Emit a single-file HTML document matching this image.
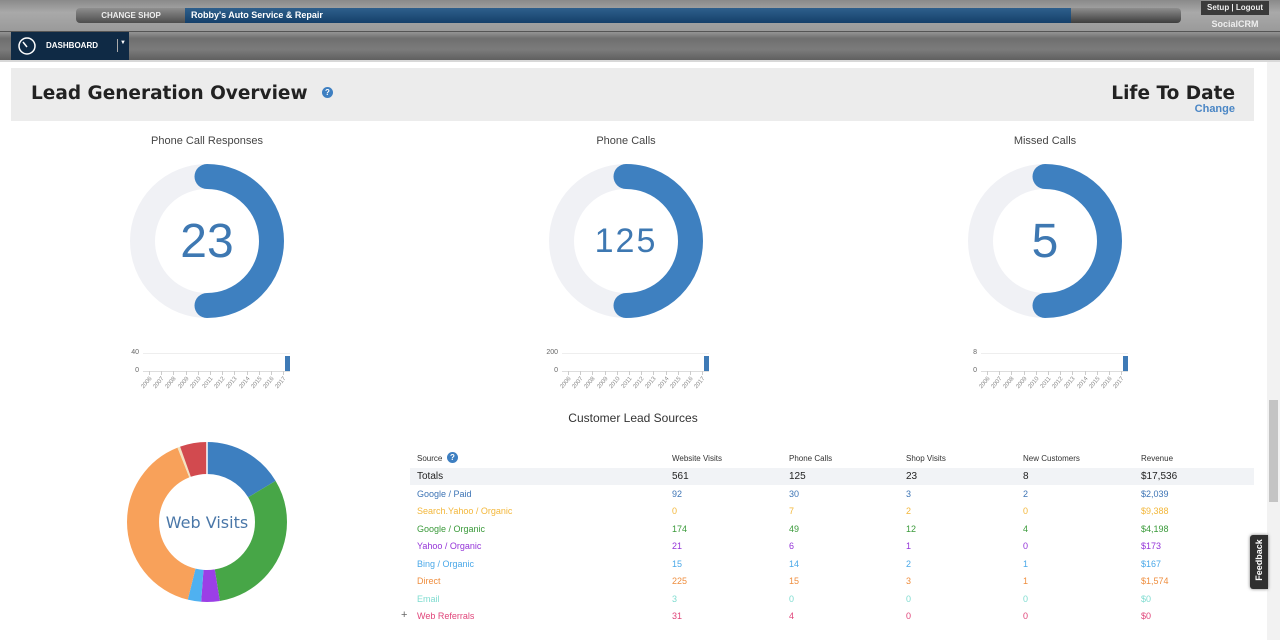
<!DOCTYPE html>
<html><head><meta charset="utf-8">
<style>
*{margin:0;padding:0;box-sizing:border-box}
body{width:1280px;height:640px;overflow:hidden;background:#fff;font-family:"Liberation Sans",sans-serif;position:relative}
.a{position:absolute}
#top{left:0;top:0;width:1280px;height:62px;background:linear-gradient(180deg,#8a8a8a 0%,#a9a9a9 20%,#9a9a9a 50%,#6f6f6f 62%,#7b7b7b 80%,#5a5a5a 100%)}
.gtitle{font-size:11px;color:#444;text-align:center;width:300px}
.num{font-size:48px;color:#3e78b2;text-align:center;width:200px}
.yl{font-size:6px;color:#888;transform:rotate(-50deg);transform-origin:right top;white-space:nowrap}
table{border-collapse:collapse;font-size:9px}
td{height:17.5px;padding:0}
</style></head><body>
<div id="top" class="a"></div>
<div class="a" style="left:76px;top:8px;width:110px;height:15px;background:linear-gradient(#8e8e8e,#4e4e4e);border-radius:4px 0 0 4px;color:#eee;font-size:8px;font-weight:bold;text-align:center;line-height:15px">CHANGE SHOP</div>
<div class="a" style="left:185px;top:8px;width:890px;height:15px;background:linear-gradient(#2e5f8c,#15406a);color:#fff;font-size:9px;font-weight:bold;line-height:15px;padding-left:6px">Robby's Auto Service &amp; Repair</div>
<div class="a" style="left:1071px;top:8px;width:110px;height:15px;background:linear-gradient(#8e8e8e,#3e3e3e);border-radius:0 4px 4px 0"></div>
<div class="a" style="left:1201px;top:1px;width:68px;height:14px;background:#3a3a3a;color:#eee;font-size:8px;font-weight:bold;text-align:center;line-height:14px">Setup | Logout</div>
<div class="a" style="left:1201px;top:19px;width:68px;color:#eee;font-size:9px;font-weight:bold;text-align:center">SocialCRM</div>
<div class="a" style="left:0;top:31px;width:1280px;height:1px;background:#555"></div>
<div class="a" style="left:11px;top:32px;width:118px;height:28px;background:#0f2a45;color:#fff;font-size:8px;font-weight:bold;line-height:28px;padding-left:35px">DASHBOARD</div>
<svg class="a" style="left:16px;top:37px" width="22" height="18"><circle cx="11" cy="9" r="8" fill="none" stroke="#fff" stroke-width="1.5"/><line x1="11" y1="10" x2="7" y2="5" stroke="#fff" stroke-width="1.5"/></svg>
<div class="a" style="left:117px;top:39px;width:1px;height:13px;background:#aaa"></div>
<div class="a" style="left:120px;top:40px;color:#fff;font-size:6px">▼</div>
<div class="a" style="left:0;top:60px;width:1280px;height:2px;background:#d8d8d8"></div>
<div class="a" style="left:1267px;top:62px;width:13px;height:578px;background:#f2f2f2"></div>
<div class="a" style="left:1269px;top:400px;width:9px;height:102px;background:#c4c4c4"></div>
<div class="a" style="left:11px;top:68px;width:1243px;height:53px;background:#ececec"></div>
<div class="a" style="left:31px;top:83px;font-size:18.5px;font-weight:bold;color:#222;font-family:'DejaVu Sans',sans-serif">Lead Generation Overview</div>
<div class="a" style="left:322px;top:87px;width:11px;height:11px;border-radius:50%;background:#3e7fc1;color:#fff;font-size:8px;text-align:center;line-height:11px;font-weight:bold">?</div>
<div class="a" style="left:1000px;top:83px;width:235px;text-align:right;font-size:18.5px;font-weight:bold;color:#222;font-family:'DejaVu Sans',sans-serif">Life To Date</div>
<div class="a" style="left:1000px;top:103px;width:235px;text-align:right;font-size:11px;font-weight:bold;color:#4a86c5">Change</div>

<svg class="a" style="left:0;top:0" width="1280" height="640">
<g fill="none" stroke-width="25">
<circle cx="207" cy="241" r="64.5" stroke="#f0f1f5"/>
<circle cx="626" cy="241" r="64.5" stroke="#f0f1f5"/>
<circle cx="1045" cy="241" r="64.5" stroke="#f0f1f5"/>
<path d="M207 176.5 A64.5 64.5 0 0 1 207 305.5" stroke="#3e80c0" stroke-linecap="round"/>
<path d="M626 176.5 A64.5 64.5 0 0 1 626 305.5" stroke="#3e80c0" stroke-linecap="round"/>
<path d="M1045 176.5 A64.5 64.5 0 0 1 1045 305.5" stroke="#3e80c0" stroke-linecap="round"/>
</g>
<g fill="none" stroke-width="32" transform="rotate(-90 207 522)">
<circle cx="207" cy="522" r="64" stroke="#3d7fc0" stroke-dasharray="65.9 402.1" stroke-dashoffset="0"/>
<circle cx="207" cy="522" r="64" stroke="#47a647" stroke-dasharray="124.7 402.1" stroke-dashoffset="-65.9"/>
<circle cx="207" cy="522" r="64" stroke="#9b3fe6" stroke-dasharray="15.1 402.1" stroke-dashoffset="-190.6"/>
<circle cx="207" cy="522" r="64" stroke="#4fb1f0" stroke-dasharray="10.8 402.1" stroke-dashoffset="-205.7"/>
<circle cx="207" cy="522" r="64" stroke="#f8a15a" stroke-dasharray="161.3 402.1" stroke-dashoffset="-216.5"/>
<circle cx="207" cy="522" r="64" stroke="#f3e3c0" stroke-dasharray="2.2 402.1" stroke-dashoffset="-377.8"/>
<circle cx="207" cy="522" r="64" stroke="#d24a4f" stroke-dasharray="22.2 402.1" stroke-dashoffset="-380"/>
</g>
<line x1="207" y1="522" x2="207" y2="440" stroke="#fff" stroke-width="1.5"/>
</svg>
<div class="a gtitle" style="left:57px;top:135px">Phone Call Responses</div>
<div class="a gtitle" style="left:476px;top:135px">Phone Calls</div>
<div class="a gtitle" style="left:895px;top:135px">Missed Calls</div>
<div class="a num" style="left:107px;top:214px">23</div>
<div class="a num" style="left:526px;top:222px;font-size:34px;letter-spacing:2px">125</div>
<div class="a num" style="left:945px;top:214px">5</div>
<div class="a" style="left:107px;top:513px;width:200px;text-align:center;font-size:16px;color:#4a77a8;font-family:'DejaVu Sans',sans-serif">Web Visits</div>

<div id="mc"></div>
<script>
var cs=[[207,"40"],[626,"200"],[1045,"8"]],h="";
cs.forEach(function(c){var x0=c[0]-64,w=147;
h+='<div class="a" style="left:'+(x0)+'px;top:353px;width:'+w+'px;height:1px;background:#eee"></div>';
h+='<div class="a" style="left:'+(x0)+'px;top:371px;width:'+w+'px;height:1px;background:#ddd"></div>';
h+='<div class="a" style="left:'+(x0-30)+'px;top:349px;width:26px;text-align:right;font-size:7px;color:#666">'+c[1]+'</div>';
h+='<div class="a" style="left:'+(x0-30)+'px;top:367px;width:26px;text-align:right;font-size:7px;color:#666">0</div>';
h+='<div class="a" style="left:'+(x0+142)+'px;top:356px;width:5px;height:15px;background:#3e7ab6"></div>';
for(var i=0;i<12;i++){var xx=x0+6+i*12.2;
h+='<div class="a" style="left:'+xx+'px;top:371px;width:1px;height:4px;background:#ccc"></div>';
h+='<div class="a yl" style="left:'+(xx-20)+'px;top:376px;width:20px;text-align:right">'+(2006+i)+'</div>';}
});
document.getElementById("mc").innerHTML=h;
</script>

<div class="a" style="left:483px;top:411px;width:300px;text-align:center;font-size:12px;color:#333">Customer Lead Sources</div>
<div class="a" style="left:410px;top:468px;width:844px;height:17px;background:#f1f3f6"></div>
<div class="a" style="left:447px;top:452px;width:11px;height:11px;border-radius:50%;background:#3e7fc1;color:#fff;font-size:8px;text-align:center;line-height:11px;font-weight:bold">?</div>
<div class="a" style="left:401px;top:609px;font-size:11px;color:#666">+</div>
<table class="a" style="left:417px;top:450px">
<colgroup><col style="width:255px"><col style="width:117px"><col style="width:117px"><col style="width:117px"><col style="width:118px"><col style="width:100px"></colgroup>
<tr style="font-size:8px;color:#333"><td>Source</td><td>Website Visits</td><td>Phone Calls</td><td>Shop Visits</td><td>New Customers</td><td>Revenue</td></tr>
<tr style="color:#222;font-size:10px"><td>Totals</td><td>561</td><td>125</td><td>23</td><td>8</td><td>$17,536</td></tr>
<tr style="color:#3d74b5"><td>Google / Paid</td><td>92</td><td>30</td><td>3</td><td>2</td><td>$2,039</td></tr>
<tr style="color:#f3b73a"><td>Search.Yahoo / Organic</td><td>0</td><td>7</td><td>2</td><td>0</td><td>$9,388</td></tr>
<tr style="color:#3a9a3a"><td>Google / Organic</td><td>174</td><td>49</td><td>12</td><td>4</td><td>$4,198</td></tr>
<tr style="color:#9434d8"><td>Yahoo / Organic</td><td>21</td><td>6</td><td>1</td><td>0</td><td>$173</td></tr>
<tr style="color:#4aa8e8"><td>Bing / Organic</td><td>15</td><td>14</td><td>2</td><td>1</td><td>$167</td></tr>
<tr style="color:#ef8e3e"><td>Direct</td><td>225</td><td>15</td><td>3</td><td>1</td><td>$1,574</td></tr>
<tr style="color:#7fdcd0"><td>Email</td><td>3</td><td>0</td><td>0</td><td>0</td><td>$0</td></tr>
<tr style="color:#e0457a"><td>Web Referrals</td><td>31</td><td>4</td><td>0</td><td>0</td><td>$0</td></tr>
</table>
<div class="a" style="left:1250px;top:535px;width:18px;height:54px;background:#2f2f2f;border-radius:3px 0 0 3px;box-shadow:0 0 3px #777"></div>
<div class="a" style="left:1233px;top:555px;width:52px;transform:rotate(-90deg);color:#fff;font-size:9px;font-weight:bold;text-align:center">Feedback</div>
</body></html>
